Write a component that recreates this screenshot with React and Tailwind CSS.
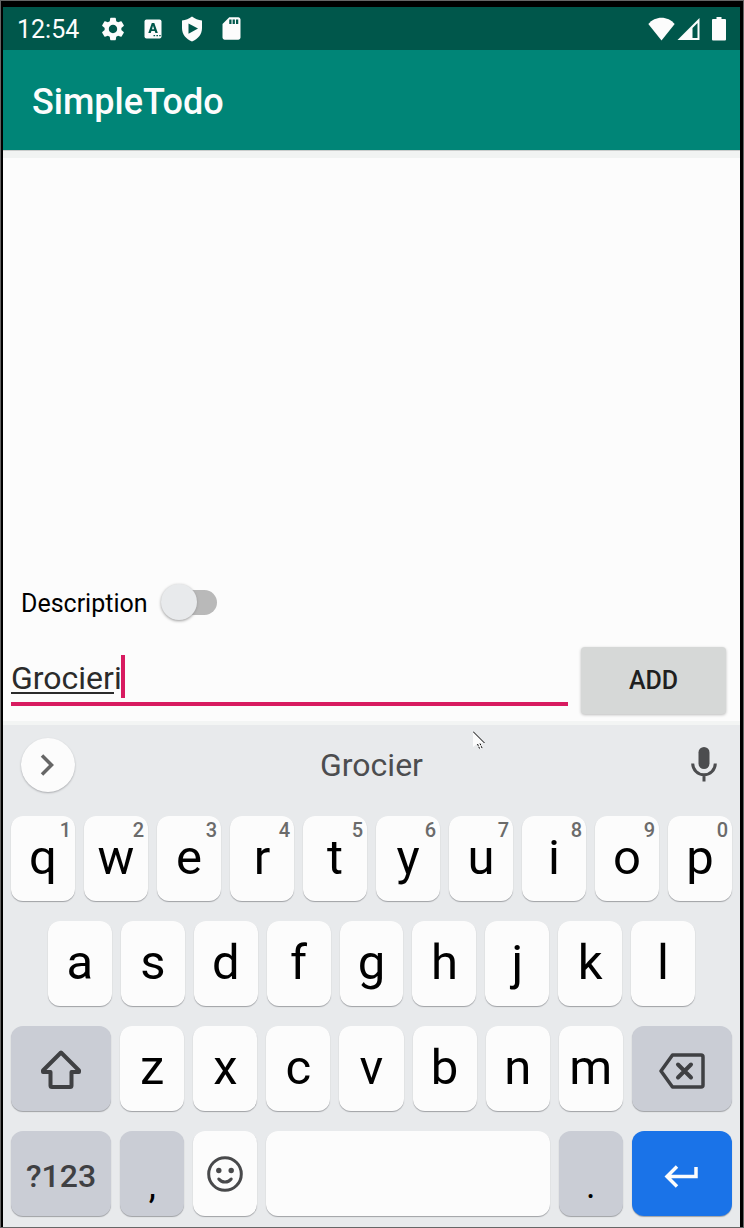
import React from "react";
import { MdSettings, MdSdCard } from "react-icons/md";

const topRow = ["q", "w", "e", "r", "t", "y", "u", "i", "o", "p"];
const homeRow = ["a", "s", "d", "f", "g", "h", "j", "k", "l"];
const bottomRow = ["z", "x", "c", "v", "b", "n", "m"];

const keyBase =
  "relative flex h-[85px] min-w-0 items-center justify-center rounded-xl shadow-[0_1px_1px_#9fa1a5]";
const lightKey = `${keyBase} bg-[#fcfcfc]`;
const darkKey = `${keyBase} bg-[#cacdd5]`;

function LetterKey({ letter, hint, className = "" }) {
  return (
    <button type="button" className={`${lightKey} ${className}`}>
      <span className="pb-[2px] text-[49px] leading-[56px] text-black">{letter}</span>
      {hint && (
        <span className="absolute top-[2px] right-1 text-[20px] leading-6 font-medium text-[#6b6b6b]">
          {hint}
        </span>
      )}
    </button>
  );
}

function StatusBar() {
  return (
    <div className="flex h-[43px] items-center justify-between bg-[#00574b] pr-[14px] pl-[14px] text-[#fcfcfc]">
      <div className="flex items-center">
        <span className="mr-5 pt-[2px] text-[25px] leading-8">12:54</span>
        <MdSettings className="mr-[17px] size-7" />
        <svg viewBox="0 0 18 20" className="mr-[19px] h-5 w-[18px]">
          <rect x="0.5" y="0.5" width="17" height="19" rx="2" fill="#fcfcfc" />
          <path
            fill="#00574b"
            fillRule="evenodd"
            d="M7.8 4h2.5l3.5 10h-2.4l-.7-2H7.4l-.7 2H4.3zM9 6.8 8 10.2h2.1zM9.5 16h1.6v1.3H9.5zM12.4 16H14v1.3h-1.6zM15.2 16h1.5v1.3h-1.5z"
          />
        </svg>
        <svg viewBox="0 0 22 26" className="mr-[15px] h-[26px] w-[22px]">
          <path
            fill="#fcfcfc"
            d="M11 .5C8 2.8 4.8 4 1 4.4V12c0 6.500 4 11 10 13.500 6-2.500 10-7 10-13.500V4.400C17.200 4 14 2.800 11 .5z"
          />
          <path fill="#00574b" d="M7.500 7.500v10.200l9.500-5.100z" />
        </svg>
        <MdSdCard className="size-[27px]" />
      </div>
      <div className="flex items-center">
        <svg viewBox="0 0 27 24" className="mr-[2px] h-6 w-[27px]">
          <path fill="#fcfcfc" d="M13.500 23.500.3 7C7-1.500 20-1.500 26.700 7z" />
        </svg>
        <svg viewBox="0 0 23 24" className="mr-3 h-6 w-[23px]">
          <path fill="#fcfcfc" fillRule="evenodd" d="M22.500 1v22H.5zM20.500 6 15.500 11v10h5z" />
        </svg>
        <svg viewBox="0 0 14 24" className="h-6 w-[14px]">
          <path
            fill="#fcfcfc"
            d="M4.500 0h5v2H13a1 1 0 0 1 1 1v19.500a1 1 0 0 1-1 1H1a1 1 0 0 1-1-1V3a1 1 0 0 1 1-1h3.500z"
          />
        </svg>
      </div>
    </div>
  );
}

function Keyboard() {
  return (
    <section aria-label="Keyboard" className="border-t-4 border-[#f3f5f4] bg-[#e8eaec] px-2 pt-[13px] pb-[11px]">
      <div className="mb-6 grid grid-cols-[54px_1fr_54px] items-center px-[10px]">
        <button
          type="button"
          aria-label="More"
          className="flex size-[54px] items-center justify-center rounded-full bg-[#fcfcfc] shadow-[0_1px_2px_#a9abaf]"
        >
          <svg viewBox="0 0 24 24" className="size-6" fill="none" stroke="#666" strokeWidth="3.500">
            <path d="m6 2.500 9.500 9.500L6 21.500" />
          </svg>
        </button>
        <button type="button" className="text-[32px] leading-10 text-[#4c4d4f]">
          Grocier
        </button>
        <button type="button" aria-label="Voice input" className="flex justify-end text-[#4c4d4f]">
          <svg viewBox="0 0 36 44" className="h-[44px] w-9">
            <rect x="12.500" y="4" width="11" height="22" rx="5.500" fill="currentColor" />
            <path
              d="M6.700 20.500a11.300 11.300 0 0 0 22.600 0M18 31.500v7"
              fill="none"
              stroke="currentColor"
              strokeWidth="3"
            />
          </svg>
        </button>
      </div>

      <div className="flex flex-col gap-5">
        <div className="grid grid-cols-10 gap-[9px]">
          {topRow.map((letter, i) => (
            <LetterKey key={letter} letter={letter} hint={String((i + 1) % 10)} />
          ))}
        </div>
        <div className="grid grid-cols-9 gap-[9px] px-[37px]">
          {homeRow.map((letter) => (
            <LetterKey key={letter} letter={letter} />
          ))}
        </div>
        <div className="flex gap-[9px]">
          <button type="button" aria-label="Shift" className={`${darkKey} flex-[100_0_0px] pt-[2px]`}>
            <svg viewBox="0 0 42 40" className="h-10 w-[42px]" fill="none" stroke="#3f4043" strokeWidth="4" strokeLinejoin="round">
              <path d="M21 2.500 3 20.500v1.500h7.500v13.500a1.500 1.500 0 0 0 1.500 1.500h18a1.500 1.500 0 0 0 1.500-1.500V22H39v-1.500z" />
            </svg>
          </button>
          {bottomRow.map((letter) => (
            <LetterKey key={letter} letter={letter} className="flex-[64_0_0px]" />
          ))}
          <button type="button" aria-label="Delete" className={`${darkKey} flex-[100_0_0px] pt-1`}>
            <svg viewBox="0 0 46 36" className="h-9 w-[46px]" fill="none" stroke="#3f4043" strokeLinejoin="round">
              <path strokeWidth="3.500" d="M13.500 2H42a2 2 0 0 1 2 2v28a2 2 0 0 1-2 2H13.500L2 18z" />
              <path strokeWidth="4" strokeLinecap="round" d="m19 11.500 13 13M32 11.500l-13 13" />
            </svg>
          </button>
        </div>
        <div className="flex gap-[9px]">
          <button type="button" className={`${darkKey} flex-[100_0_0px] pt-1 text-[32px] leading-10 font-medium text-[#3f4043]`}>
            ?123
          </button>
          <button type="button" className={`${darkKey} flex-[64_0_0px] pt-6 text-[36px] leading-10 text-black`}>
            ,
          </button>
          <button type="button" aria-label="Emoji" className={`${lightKey} flex-[64_0_0px]`}>
            <svg viewBox="0 0 38 38" className="size-[38px]" fill="none" stroke="#48494b" strokeWidth="3">
              <circle cx="19" cy="19" r="16.300" />
              <circle cx="12.800" cy="15.500" r="2.700" fill="#48494b" stroke="none" />
              <circle cx="25.200" cy="15.500" r="2.700" fill="#48494b" stroke="none" />
              <path strokeLinecap="round" d="M12.800 24c3 4 9.400 4 12.400 0" />
            </svg>
          </button>
          <button type="button" aria-label="Space" className={`${lightKey} flex-[283_0_0px]`} />
          <button type="button" className={`${darkKey} flex-[64_0_0px] pt-6 text-[36px] leading-10 text-black`}>
            .
          </button>
          <button type="button" aria-label="Enter" className={`${keyBase} flex-[100_0_0px] bg-[#1a73e8] pt-1`}>
            <svg viewBox="0 0 36 24" className="h-6 w-9" fill="none" stroke="#fcfcfc" strokeWidth="3.500">
              <path d="M32 3v9.500H3M13 2.500l-10 10 10 10" />
            </svg>
          </button>
        </div>
      </div>
    </section>
  );
}

export default function App() {
  return (
    <div className="flex min-h-screen border border-[#666] bg-black pt-[6px] pr-[3px] pl-[2px] font-[Roboto,sans-serif]">
      <div className="flex min-w-0 flex-1 flex-col bg-[#fcfcfc]">
        <StatusBar />
        <header className="relative flex h-[100px] items-center bg-[#008577] px-[29px] pt-1 shadow-[0_1px_0_#c9cccb]">
          <h1 className="text-[36px] leading-[44px] font-medium text-[#fcfcfc]">SimpleTodo</h1>
        </header>

        <main className="flex flex-1 flex-col justify-end border-t-8 border-[#f1f3f2] pb-[7px]">
          <label className="mb-[26px] flex h-[38px] items-center self-start pl-[18px] text-[25px] leading-8 text-black">
            <span className="pt-1">Description</span>
            <input
              type="checkbox"
              role="switch"
              className="relative ml-[13px] h-[25px] w-14 appearance-none rounded-full bg-[linear-gradient(90deg,transparent_30%,#b9b9b9_30%)] before:absolute before:-top-[6px] before:left-0 before:size-9 before:rounded-full before:bg-[#e8eaec] before:shadow-[0_1px_3px_#999] checked:before:left-5"
            />
          </label>
          <form className="flex items-end gap-[13px] pr-[14px] pl-2">
            <div className="relative mb-2 min-w-0 flex-1 border-b-4 border-[#d81b60]">
              <input
                type="text"
                aria-label="New item"
                defaultValue="Grocieri"
                className="block h-[55px] w-full bg-transparent pt-[6px] text-[32px] leading-10 text-[#2b2b2b] outline-none"
              />
              <span className="absolute bottom-2 left-0 h-[2px] w-[103px] bg-[#2b2b2b]" />
              <span className="absolute bottom-1 left-[110px] h-[43px] w-1 bg-[#d81b60]" />
            </div>
            <button
              type="button"
              className="h-[67px] w-[145px] rounded-[4px] bg-[#d6d8d7] text-[25px] leading-8 font-medium text-[#1f1f1f] shadow-[0_1px_3px_#bbb]"
            >
              ADD
            </button>
          </form>
        </main>

        <Keyboard />
      </div>

      <svg viewBox="0 0 14 20" className="pointer-events-none absolute top-[731px] left-[473px] h-5 w-[14px]">
        <path fill="#fcfcfc" d="M0 1v15l4-3 3 5 3-1-2-5h3z" />
        <path fill="none" stroke="#000" d="m0 .5 11.500 11.500" />
        <path fill="none" stroke="#000" strokeDasharray="2 1" d="m4.500 13 2.500 5.500M7 12.500l2.500 5.500" />
      </svg>
    </div>
  );
}
